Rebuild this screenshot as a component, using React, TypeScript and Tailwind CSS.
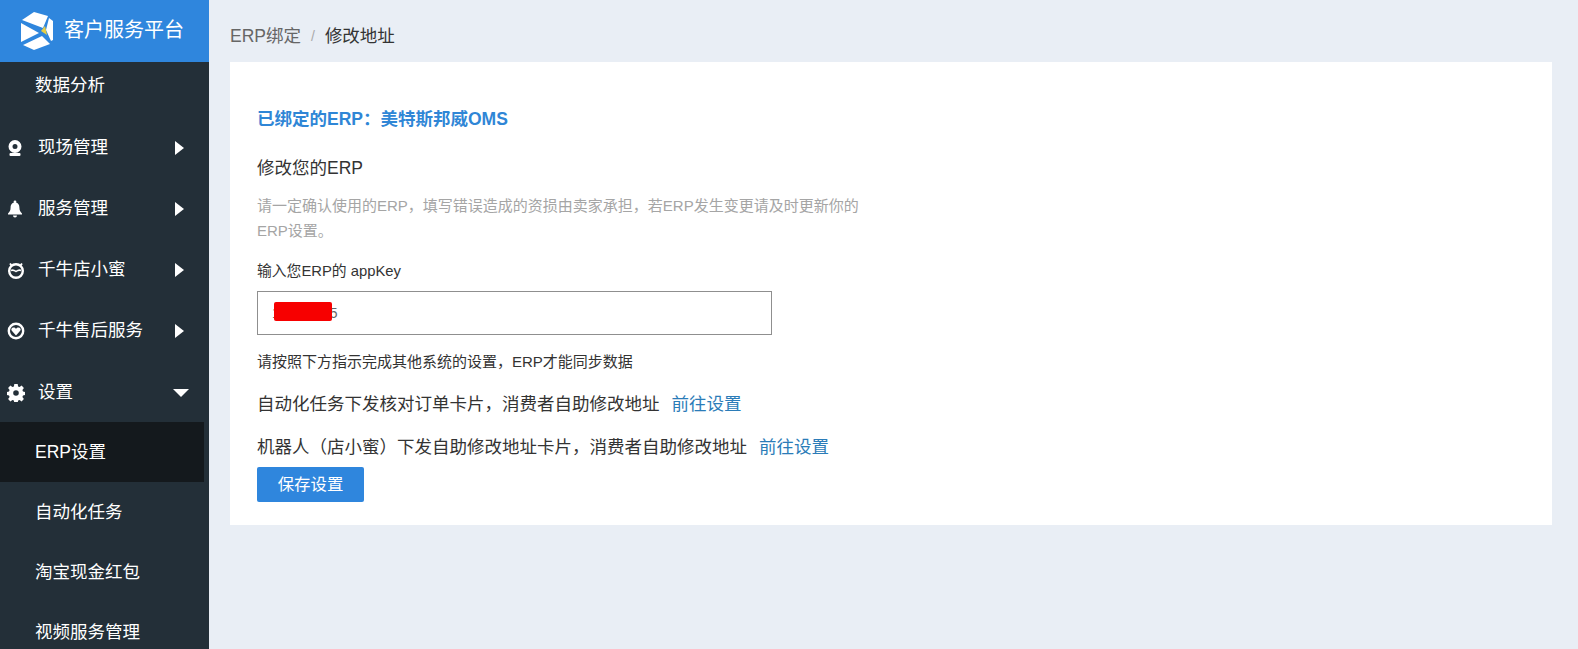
import React from "react";

const font = { fontFamily: '"Liberation Sans", "Noto Sans CJK SC", sans-serif' };

function Logo() {
  return (
    <svg width="34" height="40" viewBox="0 0 34 40" className="shrink-0">
      <polygon points="14,1 28,5 23,17 2,9" fill="#fff" />
      <polygon points="1,12 19,22 1,31" fill="#fff" />
      <polygon points="22,25 30,33 14,39 3,34" fill="#fff" />
      <polygon points="29,7 33,10 33,29 31,30 26,19" fill="#fff" />
      <polygon points="21,20 25,15 27,24" fill="#e7cf45" />
    </svg>
  );
}

function Cam() {
  return (
    <svg width="16" height="18" viewBox="0 0 16 18" fill="#fff">
      <path fillRule="evenodd" d="M8 1a6.500 6.500 0 1 1 0 13A6.500 6.500 0 0 1 8 1Zm0 4a2.500 2.500 0 1 0 0 5 2.500 2.500 0 0 0 0-5Z" />
      <rect x="2.500" y="14" width="11" height="3" rx="1" />
    </svg>
  );
}
function Bell() {
  return (
    <svg width="16" height="18" viewBox="0 0 16 18" fill="#fff">
      <circle cx="8" cy="2" r="1.400" />
      <path d="M8 2.500c3 0 4.400 2.300 4.400 5 0 3 1 4.300 2.600 6v1H1v-1c1.600-1.700 2.600-3 2.600-6 0-2.700 1.400-5 4.400-5Z" />
      <path d="M6 15.500h4a2 2 0 0 1-4 0Z" />
    </svg>
  );
}
function Bot() {
  return (
    <svg width="18" height="20" viewBox="0 0 18 20" fill="none">
      <circle cx="9" cy="11" r="6.800" stroke="#fff" strokeWidth="2.400" />
      <path d="M3 3.500 5 6M15 3.500 13 6" stroke="#fff" strokeWidth="2" />
      <path d="M4 10.500c2-1 3-.5 5 1 2-1.500 3-2 5-1" stroke="#fff" strokeWidth="1.500" />
    </svg>
  );
}
function Heart() {
  return (
    <svg width="18" height="18" viewBox="0 0 18 18" fill="none">
      <circle cx="9" cy="9" r="7.200" stroke="#fff" strokeWidth="2.400" />
      <path d="M9 13.500 4.600 8.500c-.8-1.500.3-3 1.900-3 1.100 0 2 .5 2.500 1.400.5-.9 1.400-1.400 2.500-1.400 1.600 0 2.700 1.500 1.900 3L9 13.500Z" fill="#fff" />
    </svg>
  );
}
function Gear() {
  return (
    <svg width="18" height="18" viewBox="0 0 18 18">
      <path
        fill="#fff"
        fillRule="evenodd"
        d="M7.300 0h3.400l.4 2.500 1.500.6 2-1.500 2.300 2.400-1.500 2 .6 1.500 2 .4v3.200l-2 .4-.6 1.500 1.500 2-2.300 2.400-2-1.500-1.500.6-.4 2.500H7.300l-.4-2.500-1.500-.6-2 1.500-2.300-2.400 1.500-2-.6-1.500-2-.4V7.900l2-.4.6-1.500-1.500-2 2.300-2.400 2 1.500 1.500-.6.400-2.500ZM9 6.200a2.800 2.800 0 1 0 0 5.600 2.800 2.800 0 0 0 0-5.600Z"
      />
    </svg>
  );
}

function Right() {
  return <span className="w-0 h-0 border-y-[7.5px] border-y-transparent border-l-[9px] border-l-white" />;
}
function Down() {
  return <span className="w-0 h-0 border-x-[8.5px] border-x-transparent border-t-[8.5px] border-t-white" />;
}

function Parent({ icon, label, open }: { icon: React.ReactNode; label: string; open?: boolean }) {
  return (
    <div className={"h-[61px] shrink-0 flex items-center text-white text-[17.5px] " + (open ? "pt-[2px]" : "")}>
      <span className="w-[31px] pl-[7px] flex justify-start shrink-0">{icon}</span>
      <span className="ml-[7px] flex-1 whitespace-nowrap">{label}</span>
      {open ? (
        <span className="mr-[20px] flex"><Down /></span>
      ) : (
        <span className="mr-[25px] flex"><Right /></span>
      )}
    </div>
  );
}

function Child({ label, active }: { label: string; active?: boolean }) {
  return (
    <div
      className={
        "h-[60px] shrink-0 flex items-center pl-[35px] text-white text-[17.5px] whitespace-nowrap " +
        (active ? "bg-[#14191d] w-[204px]" : "")
      }
    >
      {label}
    </div>
  );
}

export default function App() {
  return (
    <div style={font} className="flex h-[649px] w-[1578px] overflow-hidden bg-[#e9eef5]">
      <aside className="w-[209px] shrink-0 bg-[#232f38] flex flex-col overflow-hidden">
        <div className="h-[62px] shrink-0 bg-[#2f86dd] flex items-center pl-[20px] gap-[10px]">
          <Logo />
          <span className="text-[20px] text-white whitespace-nowrap pb-[3px]">客户服务平台</span>
        </div>
        <div className="h-[47px] shrink-0 flex items-center pl-[35px] text-white text-[17.5px]">数据分析</div>
        <div className="mt-[8px] shrink-0">
          <Parent icon={<Cam />} label="现场管理" />
          <Parent icon={<Bell />} label="服务管理" />
          <Parent icon={<Bot />} label="千牛店小蜜" />
          <Parent icon={<Heart />} label="千牛售后服务" />
          <Parent icon={<Gear />} label="设置" open />
        </div>
        <Child label="ERP设置" active />
        <Child label="自动化任务" />
        <Child label="淘宝现金红包" />
        <Child label="视频服务管理" />
      </aside>
      <main className="flex-1 min-w-0 pl-[21px] pr-[26px]">
        <div className="h-[62px] pt-[10px] flex items-center text-[17.5px] whitespace-nowrap">
          <span className="text-[#666]">ERP绑定</span>
          <span className="text-[#aaa] mx-[10px] text-[14px]">/</span>
          <span className="text-[#333]">修改地址</span>
        </div>
        <div className="bg-white h-[463px] pl-[27px] pt-[44px]">
          <div className="text-[17.5px] leading-[26px] font-bold text-[#2f86d6] whitespace-nowrap">已绑定的ERP：美特斯邦威OMS</div>
          <div className="mt-[23px] text-[17.5px] leading-[26px] text-[#333] whitespace-nowrap">修改您的ERP</div>
          <p className="mt-[12px] w-[610px] text-[15px] leading-[25px] text-[#a5a5a5]">
            请一定确认使用的ERP，填写错误造成的资损由卖家承担，若ERP发生变更请及时更新你的ERP设置。
          </p>
          <div className="mt-[17px] text-[14.8px] leading-[22px] text-[#333] whitespace-nowrap">输入您ERP的 appKey</div>
          <div className="relative mt-[9px] w-[515px] h-[44px] border border-[#8f8f8f] flex items-center pl-[14px] text-[14px] text-[#666]">
            <span>1</span>
            <span className="ml-[50px]">5</span>
            <span className="absolute left-[16px] top-[10px] w-[58px] h-[19px] bg-[#f70000] rounded-[2px]" />
          </div>
          <div className="mt-[16px] text-[15px] leading-[22px] text-[#333] whitespace-nowrap">请按照下方指示完成其他系统的设置，ERP才能同步数据</div>
          <div className="mt-[18px] text-[17.5px] leading-[26px] text-[#333] whitespace-nowrap">
            自动化任务下发核对订单卡片，消费者自助修改地址
            <span className="ml-[12px] text-[#2b7cb8]">前往设置</span>
          </div>
          <div className="mt-[17px] text-[17.5px] leading-[26px] text-[#333] whitespace-nowrap">
            机器人（店小蜜）下发自助修改地址卡片，消费者自助修改地址
            <span className="ml-[12px] text-[#2b7cb8]">前往设置</span>
          </div>
          <button className="mt-[7px] block w-[107px] h-[35px] bg-[#2f86dd] rounded-[2px] text-white text-[16.4px]">保存设置</button>
        </div>
      </main>
    </div>
  );
}
